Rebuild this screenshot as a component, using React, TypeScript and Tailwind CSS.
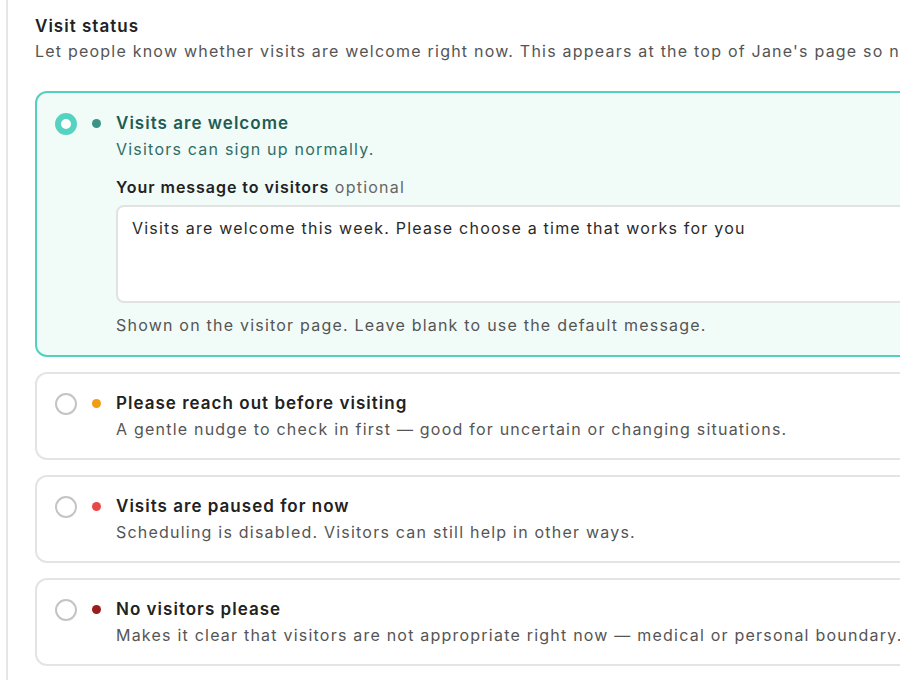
import { useState } from "react"

type Status = {
  id: string
  title: string
  desc: string
  dot: string
}

const statuses: Status[] = [
  { id: "welcome", title: "Visits are welcome", desc: "Visitors can sign up normally.", dot: "bg-[#3a9486]" },
  {
    id: "reach",
    title: "Please reach out before visiting",
    desc: "A gentle nudge to check in first — good for uncertain or changing situations.",
    dot: "bg-[#f39c12]",
  },
  {
    id: "paused",
    title: "Visits are paused for now",
    desc: "Scheduling is disabled. Visitors can still help in other ways.",
    dot: "bg-[#e84848]",
  },
  {
    id: "none",
    title: "No visitors please",
    desc: "Makes it clear that visitors are not appropriate right now — medical or personal boundary.",
    dot: "bg-[#9b1c1c]",
  },
]

function Radio({ checked }: { checked: boolean }) {
  return checked ? (
    <span className="mt-[3px] block h-[22px] w-[22px] shrink-0 rounded-full border-[6px] border-[#55d3c0] bg-white" />
  ) : (
    <span className="mt-[3px] block h-[22px] w-[22px] shrink-0 rounded-full border-2 border-[#c4c4c4] bg-white" />
  )
}

export default function App() {
  const [selected, setSelected] = useState("welcome")
  const [message, setMessage] = useState("Visits are welcome this week. Please choose a time that works for you")

  return (
    <div className="h-[680px] w-[900px] overflow-hidden bg-white font-['Inter','Noto_Sans',sans-serif] tracking-[0.076em]">
      <div className="ml-[6px] min-h-[680px] w-[1200px] border-l-2 border-[#e6e6e6] pl-[27px] pt-[14px]">
        <h2 className="text-[17px] font-semibold leading-[24px] tracking-[0.06em] text-[#222]">Visit status</h2>
        <p className="text-[16px] leading-[26px] text-[#555]">
          Let people know whether visits are welcome right now. This appears at the top of Jane's page so new visitors see it first.
        </p>

        <div className="mt-[27px] flex flex-col gap-[15px]">
          {statuses.map((s) => {
            const active = s.id === selected
            return (
              <div
                key={s.id}
                onClick={() => setSelected(s.id)}
                className={
                  active
                    ? "flex cursor-pointer items-start rounded-[12px] border-2 border-[#55d0be] bg-[#f1fcf9] px-[18px] py-[17px]"
                    : "flex cursor-pointer items-start rounded-[12px] border-2 border-[#e4e4e4] bg-white px-[18px] py-[16px]"
                }
              >
                <Radio checked={active} />
                <span className={`ml-[15px] mt-[9px] block h-[9px] w-[9px] shrink-0 rounded-full ${s.dot}`} />
                <div className="ml-[15px] flex-1">
                  <div
                    className={
                      active
                        ? "text-[17px] font-semibold leading-[26px] tracking-[0.06em] text-[#1f5c53]"
                        : "text-[17px] font-semibold leading-[26px] tracking-[0.06em] text-[#222]"
                    }
                  >
                    {s.title}
                  </div>
                  <div
                    className={
                      active ? "text-[16px] leading-[26px] text-[#2f6d64]" : "text-[16px] leading-[26px] text-[#555]"
                    }
                  >
                    {s.desc}
                  </div>

                  {active && s.id === "welcome" && (
                    <div className="mt-[12px]">
                      <label className="text-[16px] leading-[26px] text-[#222]">
                        <span className="font-semibold tracking-[0.06em]">Your message to visitors</span>{" "}
                        <span className="text-[#666]">optional</span>
                      </label>
                      <textarea
                        value={message}
                        onChange={(e) => setMessage(e.target.value)}
                        className="mt-[5px] block h-[98px] w-full resize-none rounded-[8px] border-2 border-[#e2e2e2] bg-white px-[14px] pt-[9px] text-[16px] leading-[24px] tracking-[0.076em] text-[#2a2a2a] outline-none"
                      />
                      <p className="mt-[9px] text-[16px] leading-[26px] text-[#555]">
                        Shown on the visitor page. Leave blank to use the default message.
                      </p>
                    </div>
                  )}
                </div>
              </div>
            )
          })}
        </div>
      </div>
    </div>
  )
}
